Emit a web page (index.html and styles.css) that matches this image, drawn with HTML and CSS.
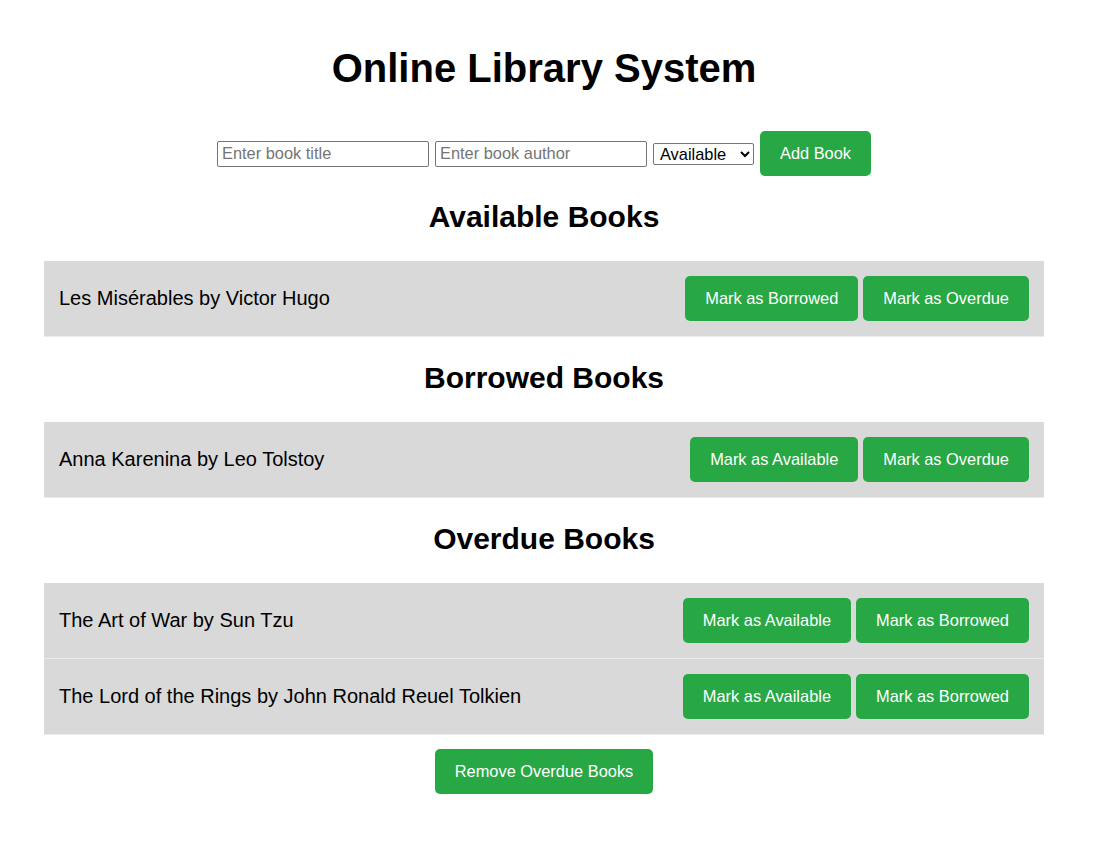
FILE: index.html
```html
<!DOCTYPE html>
<html lang="en">
<head>
<meta charset="utf-8">
<title>Online Library System</title>
<link rel="stylesheet" href="styles.css">
</head>
<body>
<main class="app">
  <h1 class="title">Online Library System</h1>
  <form class="add-form">
    <input class="field" type="text" placeholder="Enter book title">
    <input class="field" type="text" placeholder="Enter book author">
    <select class="status">
      <option>Available</option>
      <option>Borrowed</option>
      <option>Overdue</option>
    </select>
    <button type="button" class="btn">Add Book</button>
  </form>

  <section class="group">
    <h2 class="group-title">Available Books</h2>
    <ul class="book-list">
      <li class="book">
        <span class="book-name">Les Misérables by Victor Hugo</span>
        <div class="actions">
          <button type="button" class="btn">Mark as Borrowed</button>
          <button type="button" class="btn">Mark as Overdue</button>
        </div>
      </li>
    </ul>
  </section>

  <section class="group">
    <h2 class="group-title">Borrowed Books</h2>
    <ul class="book-list">
      <li class="book">
        <span class="book-name">Anna Karenina by Leo Tolstoy</span>
        <div class="actions">
          <button type="button" class="btn">Mark as Available</button>
          <button type="button" class="btn">Mark as Overdue</button>
        </div>
      </li>
    </ul>
  </section>

  <section class="group">
    <h2 class="group-title">Overdue Books</h2>
    <ul class="book-list">
      <li class="book">
        <span class="book-name">The Art of War by Sun Tzu</span>
        <div class="actions">
          <button type="button" class="btn">Mark as Available</button>
          <button type="button" class="btn">Mark as Borrowed</button>
        </div>
      </li>
      <li class="book">
        <span class="book-name">The Lord of the Rings by John Ronald Reuel Tolkien</span>
        <div class="actions">
          <button type="button" class="btn">Mark as Available</button>
          <button type="button" class="btn">Mark as Borrowed</button>
        </div>
      </li>
    </ul>
  </section>

  <div class="footer-actions">
    <button type="button" class="btn">Remove Overdue Books</button>
  </div>
</main>
</body>
</html>
```

FILE: styles.css
```css
* {
  box-sizing: border-box;
}

html, body {
  background: #ffffff;
}

body {
  margin: 0 7px 0 0;
  font-family: "Liberation Sans", Arial, sans-serif;
  color: #000000;
}

.app {
  max-width: 1000px;
  margin: 0 auto;
  padding-top: 45px;
}

.title {
  margin: 0;
  font-size: 40px;
  line-height: 46px;
  font-weight: bold;
  text-align: center;
}

.add-form {
  margin-top: 40px;
  display: flex;
  justify-content: center;
  align-items: center;
  gap: 6px;
}

.field {
  width: 212px;
  height: 26px;
  padding: 0 4px;
  border: 1px solid #767676;
  border-radius: 2px;
  font-family: "Liberation Sans", Arial, sans-serif;
  font-size: 16.4px;
  color: #000;
  background: #fff;
}

.field::placeholder {
  color: #757575;
}

.status {
  width: 101px;
  height: 22px;
  padding: 0 0 0 2px;
  border: 1px solid #767676;
  border-radius: 2px;
  font-family: "Liberation Sans", Arial, sans-serif;
  font-size: 16.4px;
  color: #000;
  background: #fff;
}

.btn {
  background: #28a745;
  color: #ffffff;
  border: none;
  border-radius: 5px;
  padding: 13px 20px;
  font-family: "Liberation Sans", Arial, sans-serif;
  font-size: 16.4px;
  line-height: 19px;
  cursor: pointer;
}

.group-title {
  margin: 23px 0 27px;
  font-size: 30px;
  line-height: 35px;
  font-weight: bold;
  text-align: center;
}

.book-list {
  list-style: none;
  margin: 0;
  padding: 0;
}

.book {
  display: flex;
  justify-content: space-between;
  align-items: center;
  height: 76px;
  padding: 0 15px;
  background: #d9d9d9;
  border-bottom: 1px solid #ebebeb;
}

.book-name {
  font-size: 20px;
}

.actions {
  display: flex;
  gap: 5px;
}

.footer-actions {
  display: flex;
  justify-content: center;
  margin-top: 14px;
}
```
